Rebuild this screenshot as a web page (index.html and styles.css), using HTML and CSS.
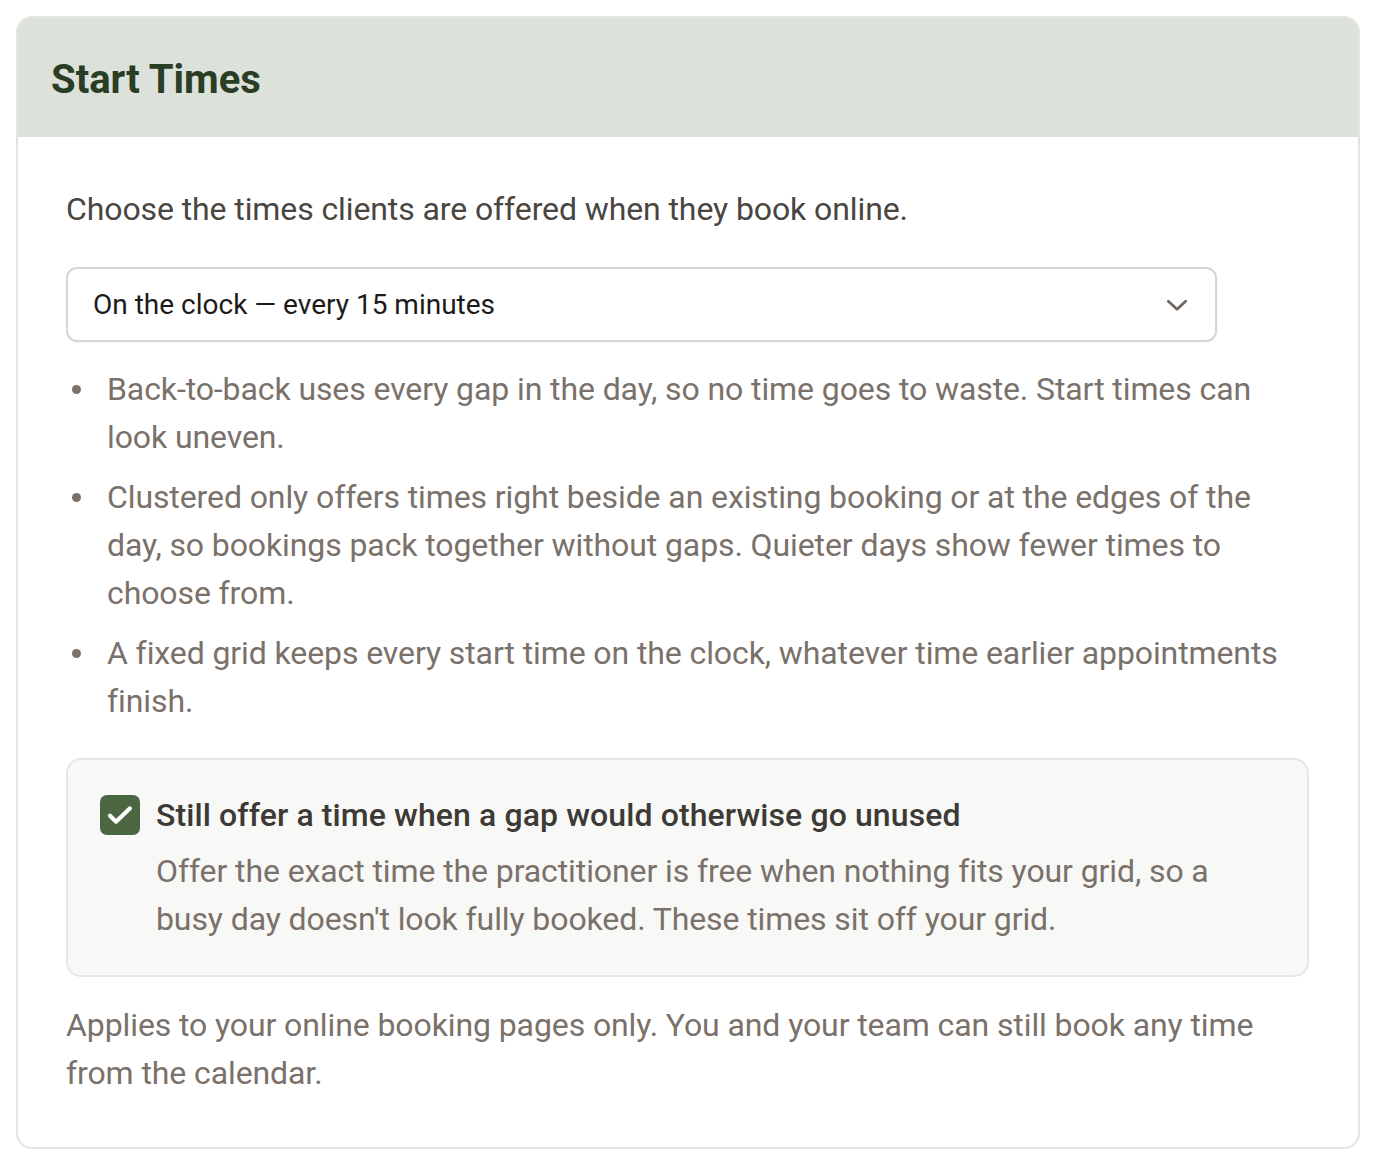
FILE: index.html
```html
<!DOCTYPE html>
<html>
<head>
<meta charset="utf-8">
<link rel="stylesheet" href="styles.css">
</head>
<body>
<section class="card">
  <header class="card-head">
    <h2 class="title">Start Times</h2>
  </header>
  <div class="card-body">
    <p class="intro">Choose the times clients are offered when they book online.</p>
    <div class="select">
      <span class="select-value">On the clock — every 15 minutes</span>
      <svg class="chev" width="26" height="26" viewBox="0 0 24 24" fill="none" stroke="#6f6863" stroke-width="2.6" stroke-linecap="round" stroke-linejoin="round"><path d="M4 8.5l8 7.5 8-7.5"/></svg>
    </div>
    <ul class="notes">
      <li>Back-to-back uses every gap in the day, so no time goes to waste. Start times can look uneven.</li>
      <li>Clustered only offers times right beside an existing booking or at the edges of the day, so bookings pack together without gaps. Quieter days show fewer times to choose from.</li>
      <li>A fixed grid keeps every start time on the clock, whatever time earlier appointments finish.</li>
    </ul>
    <div class="option">
      <div class="option-row">
        <span class="check">
          <svg width="32" height="32" viewBox="0 0 24 24" fill="none" stroke="#ffffff" stroke-width="3.1" stroke-linecap="round" stroke-linejoin="round"><path d="M4.5 12.5l4.5 4.5L19.5 7"/></svg>
        </span>
        <div class="option-text">
          <div class="option-title">Still offer a time when a gap would otherwise go unused</div>
          <p class="option-desc">Offer the exact time the practitioner is free when nothing fits your grid, so a busy day doesn't look fully booked. These times sit off your grid.</p>
        </div>
      </div>
    </div>
    <p class="foot">Applies to your online booking pages only. You and your team can still book any time from the calendar.</p>
  </div>
</section>
</body>
</html>
```
FILE: styles.css
```css
* { box-sizing: border-box; }
html, body { margin: 0; padding: 0; background: #ffffff; }
body {
  font-family: Roboto, "Liberation Sans", Arial, sans-serif;
  padding: 16px 16px;
}
.card {
  width: 1344px;
  border: 2px solid #e4e4e2;
  border-radius: 16px;
  overflow: hidden;
  background: #fff;
}
.card-head {
  background: #dce1da;
  height: 119px;
  display: flex;
  align-items: center;
  padding: 4px 33px 0 33px;
}
.title {
  margin: 0;
  font-size: 40px;
  font-weight: 700;
  color: #2a3d25;
  letter-spacing: 0;
}
.card-body {
  padding: 48px 48px 50px 48px;
}
.intro {
  margin: 0;
  font-size: 32px;
  line-height: 48px;
  color: #4a4540;
  letter-spacing: -0.1px;
}
.select {
  margin-top: 34px;
  width: 1151px;
  height: 75px;
  border: 2px solid #d9d5d1;
  border-radius: 11px;
  display: flex;
  align-items: center;
  justify-content: space-between;
  padding: 0 25px 0 25px;
  box-shadow: 0 1px 2px rgba(0,0,0,0.04);
}
.select-value {
  font-size: 28px;
  color: #1d1b19;
}
.notes {
  margin: 23px 0 0 0;
  padding: 0;
  list-style: none;
  color: #7a716a;
}
.notes li {
  display: flex;
  font-size: 32px;
  line-height: 48px;
  letter-spacing: -0.1px;
  margin-bottom: 12px;
}
.notes li::before {
  content: "";
  flex: none;
  width: 9px;
  height: 9px;
  border-radius: 50%;
  background: #7a716a;
  margin: 20px 26px 0 6px;
}
.notes li:last-child { margin-bottom: 0; }
.option {
  margin-top: 33px;
  width: 1243px;
  background: #f8f8f6;
  border: 2px solid #e6e6e3;
  border-radius: 15px;
  padding: 35px 32px 32px 32px;
}
.option-row {
  display: flex;
  gap: 16px;
  align-items: flex-start;
}
.check {
  flex: none;
  width: 40px;
  height: 40px;
  border-radius: 7px;
  background: #4a6741;
  display: flex;
  align-items: center;
  justify-content: center;
}
.option-title {
  font-size: 32px;
  line-height: 40px;
  font-weight: 500;
  color: #3d3935;
  letter-spacing: 0.1px;
}
.option-desc {
  margin: 12px 0 0 0;
  font-size: 32px;
  line-height: 48px;
  color: #7a716a;
  letter-spacing: -0.1px;
}
.foot {
  margin: 24px 0 0 0;
  font-size: 32px;
  line-height: 48px;
  color: #7a716a;
  letter-spacing: -0.1px;
}
```
